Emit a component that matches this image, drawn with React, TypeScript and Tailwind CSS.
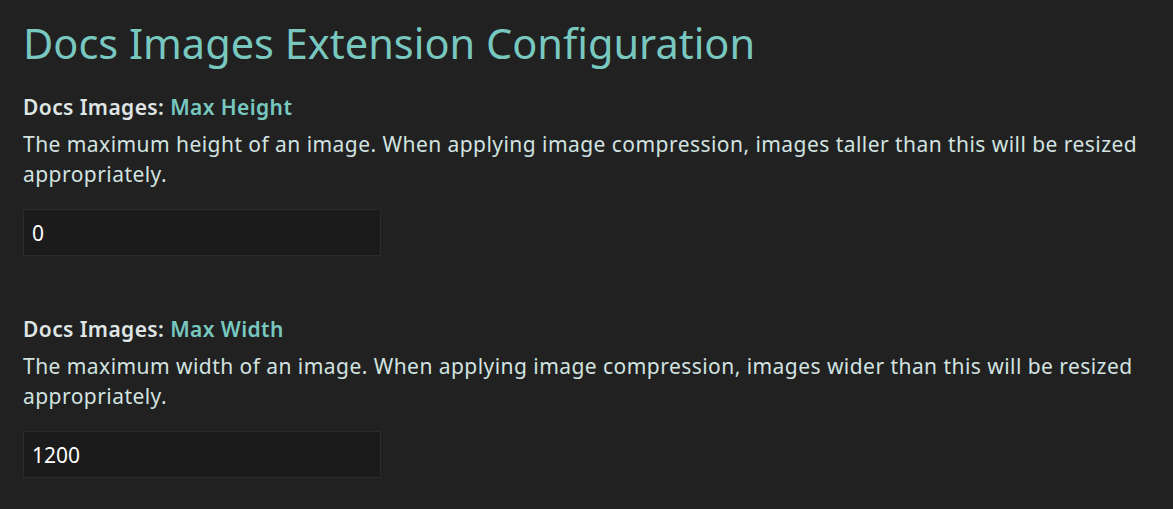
const settings = [
  {
    name: 'Max Height',
    description:
      'The maximum height of an image. When applying image compression, images taller than this will be resized appropriately.',
    value: '0',
  },
  {
    name: 'Max Width',
    description:
      'The maximum width of an image. When applying image compression, images wider than this will be resized appropriately.',
    value: '1200',
  },
]

export default function App() {
  return (
    <div
      className="min-h-screen bg-[#212121] px-[23px] pt-[19px] text-[#d2e3e0]"
      style={{ fontFamily: '"Noto Sans", "Open Sans", sans-serif' }}
    >
      <h1 className="text-[41.5px] leading-[48px] font-normal text-[#78c8c0]">
        Docs Images Extension Configuration
      </h1>
      <div className="mt-[25px] flex flex-col gap-[58px]">
        {settings.map((s) => (
          <div key={s.name}>
            <div className="text-[21px] leading-[30px] font-semibold tracking-[0.4px] text-[#dfe5e4]">
              Docs Images: <span className="text-[#78c8c0]">{s.name}</span>
            </div>
            <p className="mt-[7px] text-[21px] leading-[30px] tracking-[0.45px]">{s.description}</p>
            <input
              readOnly
              value={s.value}
              className="mt-[20px] block h-[47px] w-[358px] border border-[#2b2b2b] bg-[#1b1b1b] px-[8px] text-[21px] text-white outline-none"
            />
          </div>
        ))}
      </div>
    </div>
  )
}
